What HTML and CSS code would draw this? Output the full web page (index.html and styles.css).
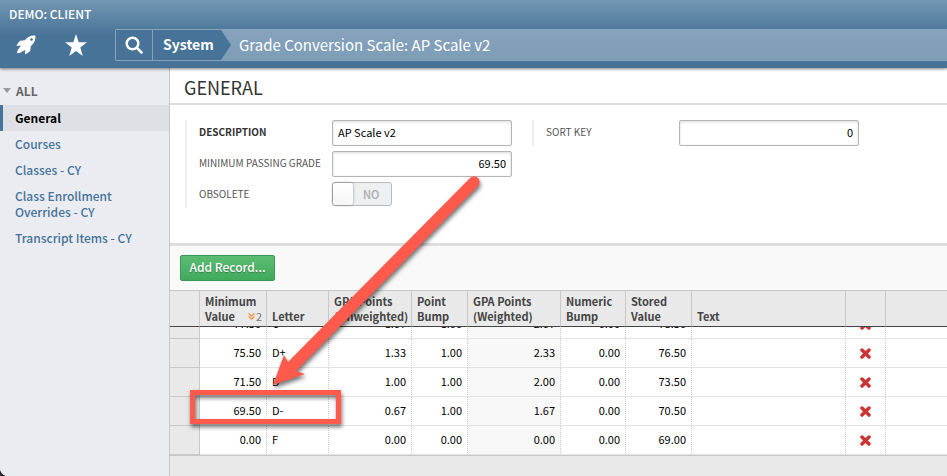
FILE: index.html
```html
<!DOCTYPE html>
<html lang="en">
<head>
  <meta charset="utf-8">
  <title>Grade Conversion Scale: AP Scale v2</title>
  <link rel="stylesheet" href="styles.css">
</head>
<body>
  <div class="window">
    <header class="header">
      <div class="client">DEMO: CLIENT</div>
      <nav class="nav">
        <button class="icon-button" type="button" aria-label="Launchpad">
          <svg width="20" height="20" viewBox="0 0 20 20">
            <path d="M19.4 .6C15.200 .2 11.800 1.600 8.800 5.200L4.200 5.800C2.800 6.800 1.400 8.900 .5 11L4.900 10.600L3 13.400C1.700 14.200 1.200 16 1 18.200C3 18.200 5 17.800 6.300 16.500L7.600 15.700L9.300 15L8.900 19.300C11 18.500 13.200 17.200 14.200 15.700L14.900 11C18.400 8.200 19.800 4.800 19.400 .6Z"/>
            <circle class="porthole" cx="15.500" cy="4.500" r="1.300"/>
          </svg>
        </button>
        <button class="icon-button" type="button" aria-label="Favorites">
          <svg width="22" height="22" viewBox="0 0 22 22">
            <path d="M11 0L13.700 8.200H22L15.300 13.400L17.800 22L11 16.900L4.200 22L6.700 13.400L0 8.200H8.300Z"/>
          </svg>
        </button>
        <div class="breadcrumb">
          <button class="search" type="button" aria-label="Search">
            <svg width="18" height="18" viewBox="0 0 18 18">
              <circle cx="7.500" cy="7.500" r="5.800"/>
              <path d="M12 12L16.500 16.500"/>
            </svg>
          </button>
          <a class="crumb" href="#">System</a>
          <svg class="crumb-arrow" width="10" height="30" viewBox="0 0 10 30"><path d="M0 0L10 15L0 30Z"/></svg>
          <span class="crumb-current">Grade Conversion Scale: AP Scale v2</span>
        </div>
      </nav>
    </header>

    <div class="body">
      <nav class="sidebar">
        <div class="sidebar-title">ALL</div>
        <a class="active" href="#">General</a>
        <a href="#">Courses</a>
        <a href="#">Classes - CY</a>
        <a href="#">Class Enrollment Overrides - CY</a>
        <a href="#">Transcript Items - CY</a>
      </nav>

      <main class="content">
        <h1>GENERAL</h1>
        <form class="form">
          <div class="group">
            <div class="field">
              <label class="required" for="description">DESCRIPTION</label>
              <input id="description" type="text" value="AP Scale v2">
            </div>
            <div class="field">
              <label for="passing">MINIMUM PASSING GRADE</label>
              <input id="passing" class="number" type="text" value="69.50">
            </div>
            <div class="field">
              <label for="obsolete">OBSOLETE</label>
              <span class="toggle">
                <input id="obsolete" type="checkbox">
                <span>NO</span>
              </span>
            </div>
          </div>
          <div class="group">
            <div class="field">
              <label for="sort">SORT KEY</label>
              <input id="sort" class="number" type="text" value="0">
            </div>
          </div>
        </form>

        <div class="toolbar">
          <button class="add" type="button">Add Record...</button>
        </div>

        <div class="grid" id="grid">
          <table>
            <colgroup>
              <col class="c-head"><col class="c-min"><col class="c-letter"><col class="c-gpa"><col class="c-point"><col class="c-weighted"><col class="c-numeric"><col class="c-stored"><col class="c-text"><col class="c-delete"><col>
            </colgroup>
            <thead>
              <tr>
                <th></th>
                <th>Minimum
                  <span class="sorted">Value
                    <span class="sort">
                      <svg width="7" height="7" viewBox="0 0 7 7"><path d="M.5 .5L3.500 3L6.500 .5M.5 3.500L3.500 6L6.500 3.500"/></svg>2
                    </span>
                  </span>
                </th>
                <th>Letter</th>
                <th>GPA Points (Unweighted)</th>
                <th>Point Bump</th>
                <th>GPA Points (Weighted)</th>
                <th>Numeric Bump</th>
                <th>Stored Value</th>
                <th>Text</th>
                <th></th>
                <th></th>
              </tr>
            </thead>
            <tbody id="rows"></tbody>
          </table>
        </div>
      </main>
    </div>
  </div>

  <!-- callout linking the passing grade to its row -->
  <svg class="callout" width="300" height="270" viewBox="0 0 300 270">
    <path class="arrow" d="M286 4A5.500 5.500 0 0 1 294 12L112 197L121 200L89 211L100 181L104 188Z"/>
    <rect x="8.500" y="218.500" width="146" height="29"/>
  </svg>

  <script>
    const records = [
      ['77.50', 'C-', '1.67', '1.00', '2.67', '0.00', '78.50'],
      ['75.50', 'D+', '1.33', '1.00', '2.33', '0.00', '76.50'],
      ['71.50', 'D', '1.00', '1.00', '2.00', '0.00', '73.50'],
      ['69.50', 'D-', '0.67', '1.00', '1.67', '0.00', '70.50'],
      ['0.00', 'F', '0.00', '0.00', '0.00', '0.00', '69.00']
    ];

    const cross = '<svg width="11" height="11" viewBox="0 0 11 11"><path d="M2 2L9 9M9 2L2 9"/></svg>';

    document.getElementById('rows').innerHTML = records.map(r => `
      <tr>
        <td></td>
        ${r.map(value => `<td>${value}</td>`).join('')}
        <td></td>
        <td><button class="delete" type="button" aria-label="Delete">${cross}</button></td>
        <td></td>
      </tr>
    `).join('');

    // open on the last records
    const grid = document.getElementById('grid');
    grid.scrollTop = grid.scrollHeight;
  </script>
</body>
</html>
```
FILE: styles.css
```css
* {
  box-sizing: border-box;
}

body {
  margin: 0;
  background-color: #2b2b30;
  font-family: "Noto Sans CJK SC", "Noto Sans", sans-serif;
  font-size: 12px;
  line-height: 16px;
  color: #000;
}

button,
input {
  font-family: inherit;
}

button {
  padding: 0;
  border: none;
  background: none;
  cursor: pointer;
}

a {
  text-decoration: none;
}

.window {
  display: flex;
  flex-direction: column;
  min-height: 100vh;
  overflow: hidden;
  border-bottom-left-radius: 8px;
  background-color: #fff;
}

.header {
  position: relative;
  height: 68px;
  background: linear-gradient(#7397b1, #477398 36px);
  box-shadow: 0 1px 3px rgba(0, 0, 0, 0.5);
  color: #fff;
}

.client {
  height: 29px;
  padding: 6px 9px;
  font-weight: 500;
}

.nav {
  display: flex;
  align-items: center;
  padding-left: 1px;
}

.icon-button {
  display: flex;
  justify-content: center;
  width: 50px;
}

.icon-button svg {
  fill: #fff;
}

.icon-button .porthole {
  fill: #477398;
}

.breadcrumb {
  display: flex;
  flex: 1;
  height: 32px;
  margin-left: 14px;
  border: 1px solid #86a5bd;
  border-right: none;
  border-radius: 2px 0 0 2px;
  background: linear-gradient(#87a2bc, #7d9db7);
}

.search {
  display: flex;
  align-items: center;
  justify-content: center;
  width: 37px;
  border-right: 1px solid #86a5bd;
  background-color: #477398;
}

.search svg {
  fill: none;
  stroke: #fff;
  stroke-width: 2.500;
  stroke-linecap: round;
}

.crumb {
  padding: 0 0 0 10px;
  width: 68px;
  background-color: #477398;
  color: #fff;
  font-size: 14px;
  font-weight: bold;
  line-height: 29px;
}

.crumb-arrow {
  fill: #477398;
}

.crumb-current {
  padding-left: 8px;
  font-size: 15px;
  line-height: 30px;
}

.body {
  display: flex;
  flex: 1;
}

.sidebar {
  width: 170px;
  padding-top: 10px;
  border-right: 1px solid #c8c8c8;
  background-color: #ebecf1;
  font-size: 12px;
  font-weight: 500;
}

.sidebar-title {
  display: flex;
  align-items: center;
  gap: 5px;
  height: 27px;
  padding: 0 0 2px 3px;
  color: #666;
  font-weight: bold;
}

.sidebar-title::before {
  content: "";
  border: 4px solid transparent;
  border-top: 5px solid #999;
  border-bottom: none;
}

.sidebar a {
  display: block;
  padding: 5px 30px 5px 12px;
  border-left: 3px solid transparent;
  color: #457399;
}

.sidebar .active {
  border-left-color: #457399;
  background-color: #dfe0e5;
  color: #000;
  font-weight: bold;
}

.content {
  flex: 1;
  min-width: 0;
  background-color: #e9e9e9;
}

h1 {
  margin: 0;
  padding: 8px 14px 5px;
  border-bottom: 2px solid #ddd;
  background-color: #fff;
  color: #333;
  font-size: 18px;
  font-weight: normal;
  line-height: 22px;
}

.form {
  display: flex;
  align-items: flex-start;
  gap: 20px;
  height: 141px;
  padding: 15px;
  border-bottom: 3px solid #ddd;
  background-color: #fff;
}

.group {
  display: flex;
  flex-direction: column;
  gap: 5px;
  border-left: 2px solid #eee;
  padding-left: 12px;
}

.field {
  display: flex;
  align-items: flex-start;
  height: 26px;
}

.field label {
  width: 133px;
  color: #555;
  font-size: 10px;
  line-height: 24px;
}

.field .required {
  color: #333;
  font-weight: bold;
}

.field input[type="text"] {
  width: 180px;
  height: 26px;
  padding: 0 5px 2px;
  border: 1px solid #b5b5b5;
  border-radius: 2px;
  box-shadow: inset 0 1px 3px rgba(0, 0, 0, 0.15);
  font-size: 11px;
}

.field .number {
  text-align: right;
}

.toggle {
  display: flex;
  align-items: center;
  width: 60px;
  height: 24px;
  border: 1px solid #b9b9b9;
  border-radius: 3px;
  background-color: #eeeff1;
  color: #aaa;
  font-size: 11px;
  font-weight: 500;
}

.toggle input {
  appearance: none;
  width: 20px;
  height: 22px;
  margin: 0 10px 0 0;
  border-radius: 3px;
  background: linear-gradient(#fff, #f6f6f6);
  box-shadow: 0 0 3px rgba(0, 0, 0, 0.4);
}

.toolbar {
  height: 44px;
  padding: 9px 10px;
  background-color: #f9f9f9;
}

.add {
  width: 95px;
  height: 26px;
  padding-bottom: 3px;
  border: 1px solid #3a9a53;
  border-radius: 2px;
  background: linear-gradient(#5cbd72, #41a95c);
  color: #fff;
  font-size: 12px;
  font-weight: 500;
  text-shadow: 0 1px 1px rgba(0, 0, 0, 0.3);
}

.grid {
  height: 166px;
  overflow-y: scroll;
  scrollbar-width: none;
  border-top: 1px solid #c8c8c8;
  border-bottom: 1px solid #c8c8c8;
}

table {
  width: 100%;
  table-layout: fixed;
  border-spacing: 0;
}

.c-head { width: 30px; }
.c-min { width: 67px; }
.c-letter { width: 62px; }
.c-gpa { width: 83px; }
.c-point { width: 56px; }
.c-weighted { width: 93px; }
.c-numeric { width: 65px; }
.c-stored { width: 66px; }
.c-text { width: 154px; }
.c-delete { width: 40px; }

th {
  position: sticky;
  top: 0;
  height: 36px;
  padding: 2px 0 2px 5px;
  border-right: 1px solid #c8c8c8;
  border-bottom: 1px solid #444;
  background-color: #e9e9e9;
  color: #444;
  font-size: 11px;
  font-weight: bold;
  line-height: 15px;
  text-align: left;
  vertical-align: bottom;
}

.sorted {
  display: flex;
  justify-content: space-between;
  padding-right: 4px;
}

.sort {
  display: flex;
  align-items: center;
  gap: 1px;
  color: #777;
  font-weight: normal;
}

.sort svg {
  fill: none;
  stroke: #f59a45;
  stroke-width: 1.500;
}

td {
  height: 29px;
  padding: 0 5px 2px;
  border-right: 1px dotted #ccc;
  border-bottom: 1px solid #e4e4e4;
  background-color: #fff;
  font-size: 11px;
  text-align: right;
}

td:first-child {
  border-right: 1px solid #c8c8c8;
  border-bottom-color: #c8c8c8;
  background-color: #e9e9e9;
}

td:nth-child(3) {
  text-align: left;
}

td:nth-child(6) {
  background-color: #f8f8f8;
}

td:nth-child(10) {
  padding-bottom: 0;
}

th:last-child,
td:last-child {
  border-right: none;
}

.delete {
  display: block;
  margin: 0 auto;
}

.delete svg {
  display: block;
  stroke: #c33;
  stroke-width: 3.500;
  stroke-linecap: round;
}

.callout {
  position: absolute;
  top: 174px;
  left: 184px;
  overflow: visible;
  pointer-events: none;
  filter: drop-shadow(1px 3px 2px rgba(0, 0, 0, 0.55));
}

.callout .arrow {
  fill: #ff5a4c;
}

.callout rect {
  fill: none;
  stroke: #ff5a4c;
  stroke-width: 5;
}
```
